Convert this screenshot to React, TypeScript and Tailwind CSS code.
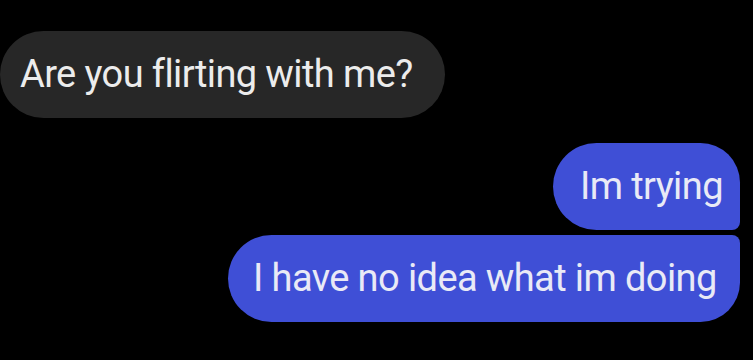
export default function App() {
  return (
    <div
      className="flex h-[360px] w-[753px] flex-col overflow-hidden bg-black pt-[31px]"
      style={{ fontFamily: "Roboto, 'Noto Sans', sans-serif" }}
    >
      <div className="flex">
        <div className="flex h-[87px] w-[445px] items-center rounded-full bg-[#272727] pl-[20px] text-[38px] tracking-[-0.6px] text-[#ececec]">
          Are you flirting with me?
        </div>
      </div>

      <div className="mt-[25px] flex flex-col items-end gap-[5px] pr-[13px]">
        <div className="flex h-[87px] w-[187px] items-center rounded-l-[44px] rounded-tr-[40px] rounded-br-[8px] bg-[#3f4fd6] pl-[27px] text-[38px] tracking-[-0.6px] text-[#e9eaf6]">
          Im trying
        </div>
        <div className="flex h-[87px] w-[512px] items-center rounded-l-[44px] rounded-tr-[8px] rounded-br-[40px] bg-[#3f4fd6] pl-[25px] text-[38px] tracking-[-0.6px] text-[#e9eaf6]">
          I have no idea what im doing
        </div>
      </div>
    </div>
  );
}
